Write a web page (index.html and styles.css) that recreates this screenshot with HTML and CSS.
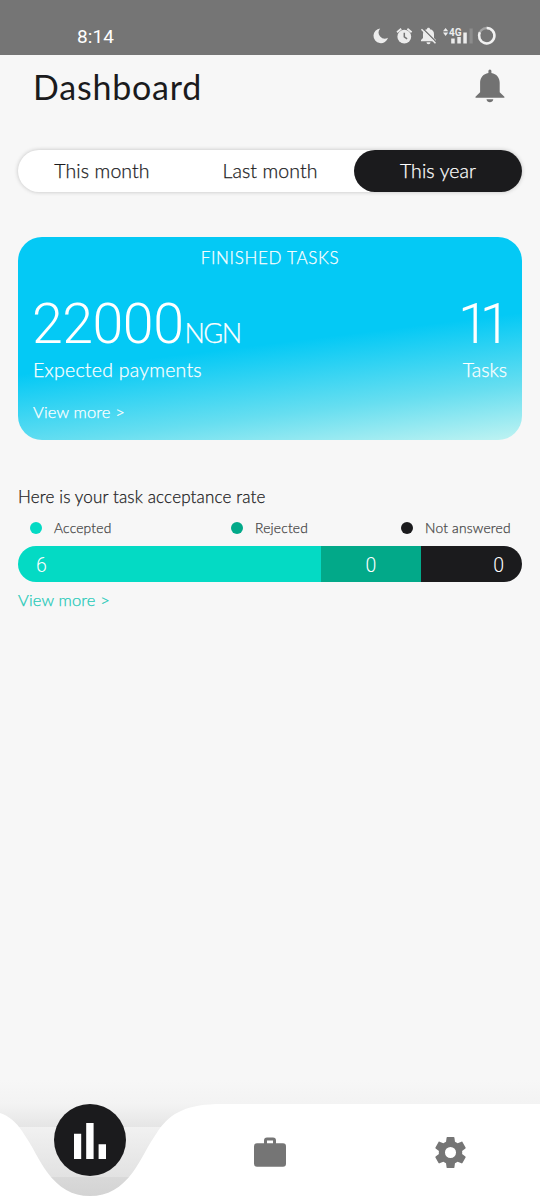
FILE: index.html
```html
<!DOCTYPE html>
<html lang="en">
<head>
<meta charset="utf-8">
<title>Dashboard</title>
<link rel="stylesheet" href="styles.css">
</head>
<body>
<div class="screen">
  <div class="status">
    <span class="time">8:14</span>
    <svg class="status-icons" width="126" height="24" viewBox="0 0 126 24" fill="#ececec">
      <path d="M8.200 5.400A7.400 7.400 0 1 0 16 14.800 6.200 6.200 0 0 1 8.200 5.400Z"/>
      <circle cx="32.300" cy="13.700" r="6.900"/>
      <path d="M25 9.200l4.200-3.500M39.600 9.200l-4.200-3.500" stroke="#ececec" stroke-width="1.800"/>
      <path d="M32.300 9.700v4.200l2.800 2" fill="none" stroke="#757575" stroke-width="1.500"/>
      <path d="M49 18.200v-1.300l2-2V11.200a5 5 0 0 1 4-5C55 4.300 58 4.300 58 6.200a5 5 0 0 1 4 5v3.700l2 2v1.300Z"/>
      <path d="M54.500 19.200h4a2 2 0 0 1-4 0Z"/>
      <path d="M50.500 5.200l14 14" stroke="#757575" stroke-width="1.500"/>
      <path d="M49.500 6.200l14 14" stroke="#ececec" stroke-width="1.500"/>
      <path d="M71 8.300l2.600-3.300 2.600 3.300ZM71 9.600l2.600 3.300 2.600-3.300Z"/>
      <path d="M79.200 15.500h3.500v5h-3.500ZM85.300 14h3.500v6.500h-3.500ZM91.300 9.500h3.500v11h-3.500Z"/>
      <path d="M97.500 5.500h3.200v15h-3.200Z" fill="#8c8c8c"/>
      <text x="77" y="12.500" class="signal">4G</text>
      <circle cx="114.700" cy="12.700" r="7.700" fill="none" stroke="#a2a2a2" stroke-width="2.300"/>
      <path d="M114.700 5a7.700 7.700 0 1 1-6.900 4.300" fill="none" stroke="#f1f1f1" stroke-width="2.500"/>
    </svg>
  </div>
  <header class="header">
    <h1 class="title">Dashboard</h1>
    <svg class="bell" width="30" height="34" viewBox="0 0 30 34" fill="#727272">
      <path d="M13.400 4V2q0-1.600 1.500-1.600T16.400 2v2c5.100.7 8.300 4.900 8.300 9.700v9.500l4.700 4.500v1H.5v-1l4.600-4.500v-9.500C5.100 8.900 8.300 4.700 13.400 4Z"/>
      <path d="M11.500 30.300h6.800c-.3 4-6.500 4-6.800 0Z"/>
    </svg>
  </header>
  <main class="content">
    <div class="tabs">
      <div class="tab">This month</div>
      <div class="tab">Last month</div>
      <div class="tab active">This year</div>
    </div>
    <section class="card">
      <div class="card-title">FINISHED TASKS</div>
      <div class="figures">
        <div class="amount"><span class="big">22000</span><span class="unit">NGN</span></div>
        <div class="count">11</div>
      </div>
      <div class="captions"><span class="expected">Expected payments</span><span class="tasks">Tasks</span></div>
      <div class="card-more">View more &gt;</div>
    </section>
    <section class="rate">
      <div class="rate-title">Here is your task acceptance rate</div>
      <div class="legend">
        <div class="key"><i class="dot mint"></i><span>Accepted</span></div>
        <div class="key"><i class="dot green"></i><span>Rejected</span></div>
        <div class="key"><i class="dot black"></i><span>Not answered</span></div>
      </div>
      <div class="bar">
        <div class="seg mint">6</div>
        <div class="seg green">0</div>
        <div class="seg black">0</div>
      </div>
      <div class="rate-more">View more &gt;</div>
    </section>
  </main>
  <nav class="nav">
    <svg class="wave" width="540" height="96" viewBox="0 0 540 96" fill="#fff">
      <path d="M222 0H540V96H0V9C9 12 16 18 22 27C33 43 39 57 47 68C59 84 72 92 90 92S121 84 133 68C141 57 147 43 158 27C171 8 188 0 222 0Z"/>
    </svg>
    <div class="items">
      <div class="item current">
        <div class="disc">
          <svg width="32" height="36" viewBox="0 0 32 36" fill="#fff"><path d="M0 10.700h7.200V36H0ZM12.200 0h7.400v36h-7.400ZM24.600 21.300h7.400V36h-7.400Z"/></svg>
        </div>
      </div>
      <div class="item">
        <svg width="32" height="30" viewBox="0 0 32 30"><path d="M11.500 7V3.500q0-1.500 1.500-1.500h6q1.500 0 1.500 1.500V7" fill="none" stroke="#757575" stroke-width="3"/><rect y="6.200" width="32" height="23.500" rx="3" fill="#757575"/></svg>
      </div>
      <div class="item">
        <svg width="39" height="39" viewBox="0 0 24 24" fill="#757575"><path d="M19.140 12.940c.04-.3.060-.61.060-.94 0-.32-.02-.64-.07-.94l2.030-1.580c.18-.14.230-.41.120-.61l-1.920-3.320c-.12-.22-.37-.29-.59-.22l-2.390.96c-.5-.38-1.030-.7-1.620-.94l-.36-2.540c-.04-.24-.24-.41-.48-.41h-3.840c-.24 0-.43.170-.47.410l-.36 2.540c-.59.240-1.130.570-1.620.940l-2.390-.96c-.22-.08-.47 0-.59.220L2.740 8.870c-.12.210-.08.470.120.610l2.030 1.580c-.05.300-.09.630-.09.940s.02.640.070.940l-2.030 1.580c-.18.140-.23.410-.12.610l1.920 3.320c.12.220.37.290.59.220l2.390-.96c.5.380 1.030.7 1.620.94l.36 2.540c.05.240.240.410.480.410h3.840c.24 0 .44-.17.470-.41l.36-2.540c.59-.24 1.130-.56 1.620-.94l2.390.96c.22.080.470 0 .59-.22l1.920-3.320c.12-.22.070-.47-.12-.61l-2.010-1.580zM12 15.400a3.400 3.400 0 1 1 0-6.800 3.400 3.400 0 0 1 0 6.800z"/></svg>
      </div>
    </div>
  </nav>
</div>
</body>
</html>
```
FILE: styles.css
```css
* { box-sizing: border-box; }
body { margin: 0; font-family: Lato, "Open Sans", sans-serif; font-weight: 400; }
.screen { width: 540px; height: 1200px; display: flex; flex-direction: column; background: #f7f7f7; color: #1b1b1d; overflow: hidden; white-space: nowrap; }
.status { height: 55px; flex: none; background: #757575; display: flex; justify-content: space-between; padding: 23px 42px 0 77px; }
.time { font: 400 19px/27px Roboto, sans-serif; color: #fff; letter-spacing: .1px; }
.status-icons { display: block; }
.signal { font: 700 10px Roboto, sans-serif; }
.header { height: 63px; flex: none; display: flex; justify-content: space-between; padding: 0 35px 0 33px; }
.title { margin: 0; font-size: 34px; font-weight: 400; line-height: 63px; letter-spacing: .8px; }
.bell { margin-top: 14px; }
.content { flex: 1; padding: 31.500px 18px 0; font-weight: 300; -webkit-text-stroke-width: .25px; }
.tabs { display: grid; grid-template-columns: repeat(3, 1fr); height: 42px; border-radius: 21px; background: #fff; box-shadow: 0 0 4px rgba(0,0,0,.22); }
.tab { text-align: center; font-size: 19.500px; line-height: 42px; letter-spacing: .1px; border-radius: 21px; }
.tab.active { background: #1b1b1d; color: #fff; }
.card { margin-top: 45px; height: 203px; border-radius: 24px; padding: 10.500px 15px 0; color: #fff; background: linear-gradient(173deg, #04c9f5 52%, #66def0 79%, #c0f3f2 100%); display: flex; flex-direction: column; }
.card-title { text-align: center; font-size: 17px; line-height: 22px; letter-spacing: .7px; }
.figures { display: flex; justify-content: space-between; align-items: baseline; height: 66px; margin-top: 22.500px; line-height: 66px; font-family: Roboto, sans-serif; font-size: 55.500px; }
.amount, .count { -webkit-text-stroke-width: 0; }
.big { letter-spacing: -.5px; margin-left: -1px; }
.unit { font-family: Lato, sans-serif; font-size: 27px; letter-spacing: -1.500px; margin-left: 1px; -webkit-text-stroke-width: .25px; }
.count { width: 46px; letter-spacing: -9px; text-indent: -3px; }
.captions { display: flex; justify-content: space-between; margin-top: -.5px; font-size: 19.500px; line-height: 26px; }
.expected { letter-spacing: .25px; }
.card-more { margin-top: 18px; font-size: 16.500px; line-height: 22px; letter-spacing: .15px; }
.rate { margin-top: 46.500px; }
.rate-title { font-size: 17px; line-height: 22px; letter-spacing: .15px; }
.legend { display: grid; grid-template-columns: 201px 170px auto; padding-left: 12px; margin-top: 9px; font-size: 13.800px; line-height: 22px; letter-spacing: .2px; color: #444; }
.key { display: flex; align-items: center; gap: 12px; }
.dot { width: 12px; height: 12px; border-radius: 50%; }
.mint { background: #04dac4; }
.green { background: #02a989; }
.black { background: #1b1b1d; }
.bar { display: grid; grid-template-columns: 303px 100px 1fr; margin-top: 6.500px; height: 36px; border-radius: 18px; overflow: hidden; color: #fff; font-family: Roboto, sans-serif; font-size: 19.500px; line-height: 39px; -webkit-text-stroke-width: 0; }
.seg { padding: 0 18px; }
.seg.green { text-align: center; }
.seg.black { text-align: right; }
.rate-more { margin-top: 7px; font-size: 16.500px; line-height: 22px; letter-spacing: .15px; color: #21c9b7; }
.nav { height: 120px; flex: none; position: relative; padding-top: 24px; background: linear-gradient(#f7f7f7, #f3f3f3 24px, #e5e5e5 47px, #f1f1f1 47px, #e2e2e2 97px, #d9d9d9 97px, #d2d2d2); }
.wave { display: block; }
.items { position: absolute; inset: 24px 0 0; display: grid; grid-template-columns: repeat(3, 1fr); }
.item { display: flex; align-items: center; justify-content: center; }
.item.current { align-items: flex-start; }
.disc { width: 72px; height: 72px; border-radius: 50%; background: #1b1b1d; display: flex; align-items: center; justify-content: center; padding-top: 2px; }
```
